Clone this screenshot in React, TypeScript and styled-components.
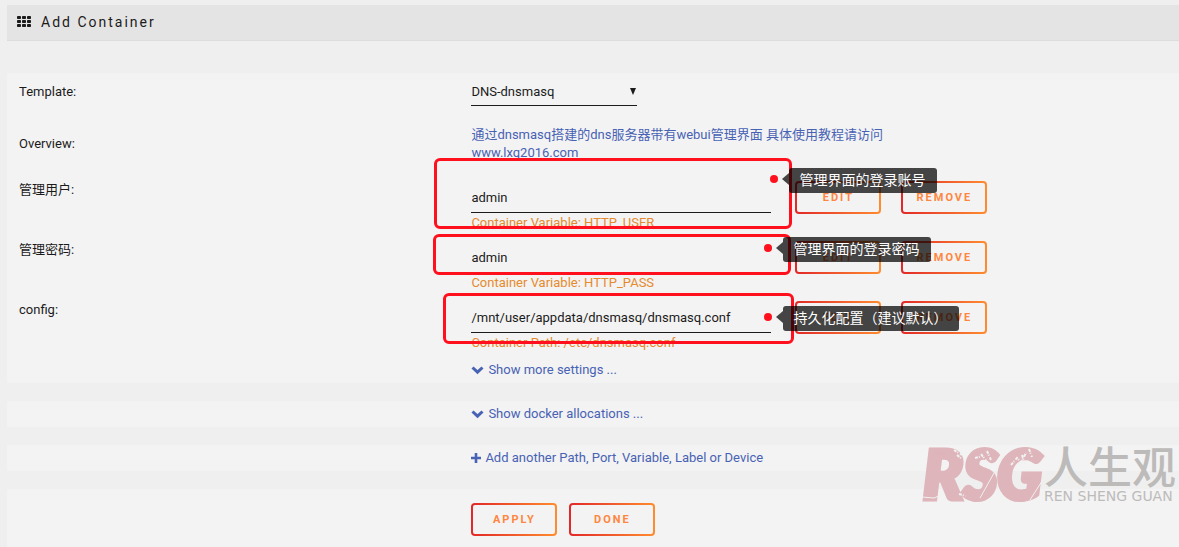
import React from "react";
import styled, { createGlobalStyle } from "styled-components";

const GlobalStyle = createGlobalStyle`
  *, *::before, *::after { box-sizing: border-box; }
  body {
    margin: 0;
    background: #efefef;
    color: #1c1b1b;
    font-family: Roboto, "Noto Sans CJK SC", sans-serif;
    font-size: 13px;
    line-height: 18px;
  }
`;

const Page = styled.main`
  position: relative;
  display: flex;
  flex-direction: column;
  min-height: 100vh;
  padding: 5px 0 0 7px;
  overflow: hidden;
`;

const TitleBar = styled.header`
  display: flex;
  align-items: center;
  gap: 10px;
  height: 36px;
  margin-bottom: 32px;
  padding: 0 10px 2px;
  background: #e4e4e4;
  border-bottom: 1px solid #dcdcdc;
`;

const Title = styled.h1`
  margin: 0;
  font-size: 14px;
  font-weight: 400;
  letter-spacing: 2px;
`;

const Form = styled.form`
  display: flex;
  flex: 1;
  flex-direction: column;
  gap: 18px;
`;

const Panel = styled.section<{ $grow?: boolean }>`
  flex: ${(p) => (p.$grow ? "1 0 auto" : "none")};
  padding-left: 12px;
  background: #f3f3f3;
`;

const Row = styled.div<{ $top?: number; $bottom?: number }>`
  display: grid;
  grid-template-columns: 39% 1fr;
  padding-top: ${(p) => p.$top ?? 0}px;
  padding-bottom: ${(p) => p.$bottom ?? 0}px;
`;

const Label = styled.label<{ $centered?: boolean }>`
  align-self: ${(p) => (p.$centered ? "center" : "start")};
  padding-top: ${(p) => (p.$centered ? 0 : 9)}px;
`;

const Cell = styled.div`
  position: relative;
  grid-column: 2;
`;

const SelectBox = styled.div`
  display: flex;
  align-items: center;
  width: 166px;
  border-bottom: 1px solid #1c1b1b;

  svg {
    flex: none;
    margin-left: -8px;
    pointer-events: none;
  }
`;

const Select = styled.select`
  width: 100%;
  height: 28px;
  padding: 2px 12px 0 0;
  border: 0;
  appearance: none;
  background: transparent;
  color: inherit;
  font: inherit;
  outline: none;
`;

const Overview = styled.output`
  display: block;
  color: #4862b4;
`;

const Link = styled.a`
  display: flex;
  align-items: center;
  gap: 4px;
  width: fit-content;
  color: #4862b4;
  text-decoration: none;
`;

const Controls = styled.div`
  display: flex;
  align-items: flex-end;
  height: 42px;
`;

const Input = styled.input`
  width: 300px;
  height: 30px;
  margin: 0 24px 1px 0;
  padding: 0;
  border: 0;
  border-bottom: 1px solid #1c1b1b;
  background: transparent;
  color: inherit;
  font: inherit;
  outline: none;
`;

const Button = styled.button`
  min-width: 86px;
  height: 33px;
  padding: 0 12px;
  border: 2px solid transparent;
  border-radius: 4px;
  background:
    linear-gradient(#f3f3f3, #f3f3f3) padding-box,
    linear-gradient(90deg, #e22828, #ff8c2f) border-box;
  color: #ff8640;
  font: inherit;
  font-size: 11px;
  font-weight: 700;
  letter-spacing: 2px;
  text-transform: uppercase;
`;

const ButtonGroup = styled.div<{ $gap: number }>`
  display: flex;
  gap: ${(p) => p.$gap}px;
`;

const Caption = styled.div`
  color: #e68a2e;
`;

const Outline = styled.div<{ $x: number; $y: number; $w: number; $h: number }>`
  position: absolute;
  left: ${(p) => p.$x}px;
  top: ${(p) => p.$y}px;
  width: ${(p) => p.$w}px;
  height: ${(p) => p.$h}px;
  border: 3px solid #ff101c;
  border-radius: 6px;
  pointer-events: none;
`;

const Callout = styled.div<{ $x: number; $y: number }>`
  position: absolute;
  left: ${(p) => p.$x}px;
  top: ${(p) => p.$y}px;
  display: flex;
  align-items: center;
  pointer-events: none;
`;

const Dot = styled.span`
  width: 8px;
  height: 8px;
  margin: 0 4px 3px 0;
  border-radius: 50%;
  background: #ff101c;
`;

const Arrow = styled.span`
  margin-bottom: 3px;
  border: solid transparent;
  border-width: 6px 7px 6px 0;
  border-right-color: rgba(0, 0, 0, 0.72);
`;

const Bubble = styled.span`
  height: 25px;
  padding: 0 12px 0 10px;
  border-radius: 3px;
  background: rgba(0, 0, 0, 0.72);
  color: #fff;
  font-size: 14px;
  line-height: 25px;
  white-space: nowrap;
`;

const Watermark = styled.svg`
  position: absolute;
  right: 0;
  bottom: 26px;
  pointer-events: none;
`;

type Box = { x: number; y: number; w: number; h: number };

type Setting = {
  id: string;
  label: string;
  value: string;
  caption: string;
  outline: Box;
  note: { x: number; y: number; text: string };
};

const settings: Setting[] = [
  {
    id: "http-user",
    label: "管理用户:",
    value: "admin",
    caption: "Container Variable: HTTP_USER",
    outline: { x: -37, y: -14, w: 358, h: 71 },
    note: { x: 299, y: -4, text: "管理界面的登录账号" },
  },
  {
    id: "http-pass",
    label: "管理密码:",
    value: "admin",
    caption: "Container Variable: HTTP_PASS",
    outline: { x: -38, y: 2, w: 358, h: 41 },
    note: { x: 293, y: 5, text: "管理界面的登录密码" },
  },
  {
    id: "config",
    label: "config:",
    value: "/mnt/user/appdata/dnsmasq/dnsmasq.conf",
    caption: "Container Path: /etc/dnsmasq.conf",
    outline: { x: -28, y: 1, w: 351, h: 51 },
    note: { x: 293, y: 14, text: "持久化配置（建议默认）" },
  },
];

function GridIcon() {
  return (
    <svg width="14" height="11" viewBox="0 0 14 11" fill="#1c1b1b" aria-hidden="true">
      {[0, 4, 8].map((y) =>
        [0, 5, 10].map((x) => <rect key={`${x}-${y}`} x={x} y={y} width="4" height="3" rx="0.8" />)
      )}
    </svg>
  );
}

function ChevronIcon() {
  return (
    <svg width="13" height="10" viewBox="0 0 13 10" fill="none" aria-hidden="true">
      <path d="M1.5 2.5l5 4.7 5-4.7" stroke="currentColor" strokeWidth="3" />
    </svg>
  );
}

function PlusIcon() {
  return (
    <svg width="10" height="10" viewBox="0 0 10 10" fill="none" aria-hidden="true">
      <path d="M5 0v10M0 5h10" stroke="currentColor" strokeWidth="2.6" />
    </svg>
  );
}

function SettingRow({ item }: { item: Setting }) {
  const { outline, note } = item;
  return (
    <Row>
      <Label htmlFor={item.id}>{item.label}</Label>
      <Cell>
        <Controls>
          <Input id={item.id} type="text" defaultValue={item.value} />
          <ButtonGroup $gap={20}>
            <Button type="button">Edit</Button>
            <Button type="button">Remove</Button>
          </ButtonGroup>
        </Controls>
        <Caption>{item.caption}</Caption>
        <Outline $x={outline.x} $y={outline.y} $w={outline.w} $h={outline.h} />
        <Callout $x={note.x} $y={note.y}>
          <Dot />
          <Arrow />
          <Bubble>{note.text}</Bubble>
        </Callout>
      </Cell>
    </Row>
  );
}

function Logo() {
  return (
    <Watermark width="260" height="100" viewBox="0 -20 260 100">
      <text
        x="4"
        y="58"
        fill="#deb5ba"
        stroke="#deb5ba"
        strokeWidth="5"
        fontFamily="Lato, sans-serif"
        fontSize="66"
        fontWeight="900"
        fontStyle="italic"
      >
        RSG
      </text>
      <g stroke="#f1f1f1" fill="none">
        <path d="M61 57l14-25M111 59l14-22M3 56l12 1 5-2" />
        <path
          d="M35 9l8 5M38 14l5 4M56 17l8-2M62 13l6 8M68 10l4 9M92 24l6-7 4 4 5-9M103 14l3 10M110 8l3 8M40 53l7 2"
          strokeWidth="2"
          strokeDasharray="3 1 1 2"
        />
      </g>
      <text x="125" y="43" fill="#bdbbba" fontFamily="'Noto Sans CJK SC', sans-serif" fontSize="44" fontWeight="500">
        人生观
      </text>
      <text x="125" y="60" fill="#bdbbba" fontFamily="'DejaVu Sans', sans-serif" fontSize="14">
        REN SHENG GUAN
      </text>
    </Watermark>
  );
}

export default function App() {
  return (
    <>
      <GlobalStyle />
      <Page>
        <TitleBar>
          <GridIcon />
          <Title>Add Container</Title>
        </TitleBar>
        <Form onSubmit={(e) => e.preventDefault()}>
          <Panel>
            <Row $top={4} $bottom={20}>
              <Label htmlFor="template" $centered>
                Template:
              </Label>
              <Cell>
                <SelectBox>
                  <Select id="template" defaultValue="DNS-dnsmasq">
                    <option>DNS-dnsmasq</option>
                  </Select>
                  <svg width="8" height="8" viewBox="0 0 8 8" aria-hidden="true">
                    <path d="M1 1h6L4 8z" fill="#1c1b1b" />
                  </svg>
                </SelectBox>
              </Cell>
            </Row>
            <Row $bottom={10}>
              <Label htmlFor="overview" $centered>
                Overview:
              </Label>
              <Cell>
                <Overview id="overview">
                  通过dnsmasq搭建的dns服务器带有webui管理界面 具体使用教程请访问
                  <Link href="#site">www.lxg2016.com</Link>
                </Overview>
              </Cell>
            </Row>
            {settings.map((item) => (
              <SettingRow key={item.id} item={item} />
            ))}
            <Row $top={9} $bottom={4}>
              <Cell>
                <Link href="#more">
                  <ChevronIcon />
                  Show more settings ...
                </Link>
              </Cell>
            </Row>
          </Panel>
          <Panel>
            <Row $top={4} $bottom={4}>
              <Cell>
                <Link href="#allocations">
                  <ChevronIcon />
                  Show docker allocations ...
                </Link>
              </Cell>
            </Row>
          </Panel>
          <Panel>
            <Row $top={4} $bottom={4}>
              <Cell>
                <Link href="#add">
                  <PlusIcon />
                  Add another Path, Port, Variable, Label or Device
                </Link>
              </Cell>
            </Row>
          </Panel>
          <Panel $grow>
            <Row $top={14} $bottom={10}>
              <Cell>
                <ButtonGroup $gap={12}>
                  <Button type="submit">Apply</Button>
                  <Button type="button">Done</Button>
                </ButtonGroup>
              </Cell>
            </Row>
          </Panel>
        </Form>
        <Logo />
      </Page>
    </>
  );
}
